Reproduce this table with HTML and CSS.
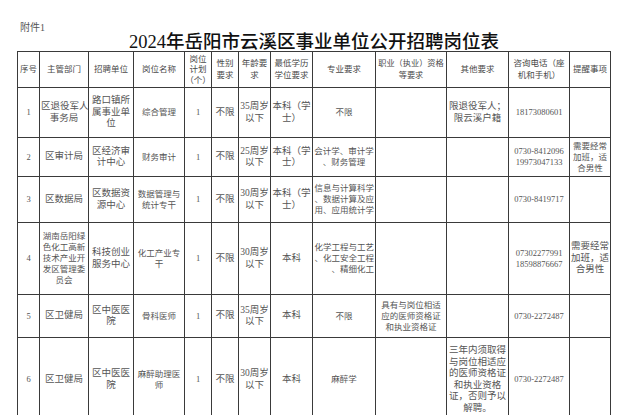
FILE: index.html
```html
<!DOCTYPE html>
<html lang="zh-CN">
<head>
<meta charset="utf-8">
<title>2024年岳阳市云溪区事业单位公开招聘岗位表</title>
<link rel="stylesheet" href="styles.css">
</head>
<body>
<div class="page">
  <div class="attach">附件1</div>
  <h1 class="title">2024年岳阳市云溪区事业单位公开招聘岗位表</h1>
  <table class="grid">
    <colgroup>
      <col class="c1"><col class="c2"><col class="c3"><col class="c4"><col class="c5"><col class="c6"><col class="c7"><col class="c8"><col class="c9"><col class="c10"><col class="c11"><col class="c12"><col class="c13">
    </colgroup>
    <thead>
      <tr class="r-head">
        <th>序号</th>
        <th>主管部门</th>
        <th>招聘单位</th>
        <th>岗位名称</th>
        <th class="three">岗位<br>计划<br>（个）</th>
        <th>性别<br>要求</th>
        <th>年龄要<br>求</th>
        <th>最低学历<br>学位要求</th>
        <th>专业要求</th>
        <th class="narrow">职业（执业）资格<br>等要求</th>
        <th>其他要求</th>
        <th>咨询电话（座<br>机和手机）</th>
        <th>提醒事项</th>
      </tr>
    </thead>
    <tbody>
      <tr class="r1">
        <td>1</td>
        <td class="big">区退役军人<br>事务局</td>
        <td class="big">路口镇所<br>属事业单<br>位</td>
        <td>综合管理</td>
        <td>1</td>
        <td class="big">不限</td>
        <td class="big">35周岁<br>以下</td>
        <td class="big">本科（学<br>士）</td>
        <td>不限</td>
        <td></td>
        <td class="big">限退役军人；<br>限云溪户籍</td>
        <td class="num">18173080601</td>
        <td></td>
      </tr>
      <tr class="r2">
        <td>2</td>
        <td class="big">区审计局</td>
        <td class="big">区经济审<br>计中心</td>
        <td>财务审计</td>
        <td>1</td>
        <td class="big">不限</td>
        <td class="big">25周岁<br>以下</td>
        <td class="big">本科（学<br>士）</td>
        <td>会计学、审计学<br>、财务管理</td>
        <td></td>
        <td></td>
        <td class="num">0730-8412096<br>19973047133</td>
        <td>需要经常<br>加班，适<br>合男性</td>
      </tr>
      <tr class="r3">
        <td>3</td>
        <td class="big">区数据局</td>
        <td class="big">区数据资<br>源中心</td>
        <td>数据管理与<br>统计专干</td>
        <td>1</td>
        <td class="big">不限</td>
        <td class="big">30周岁<br>以下</td>
        <td class="big">本科（学<br>士）</td>
        <td class="right">信息与计算科学<br>、数据计算及应<br>用、应用统计学</td>
        <td></td>
        <td></td>
        <td class="num">0730-8419717</td>
        <td></td>
      </tr>
      <tr class="r4">
        <td>4</td>
        <td>湖南岳阳绿<br>色化工高新<br>技术产业开<br>发区管理委<br>员会</td>
        <td class="big">科技创业<br>服务中心</td>
        <td>化工产业专<br>干</td>
        <td>1</td>
        <td class="big">不限</td>
        <td class="big">30周岁<br>以下</td>
        <td class="big">本科</td>
        <td class="right">化学工程与工艺<br>、化工安全工程<br>、精细化工</td>
        <td></td>
        <td></td>
        <td class="num">07302277991<br>18598876667</td>
        <td class="big">需要经常<br>加班，适<br>合男性</td>
      </tr>
      <tr class="r5">
        <td>5</td>
        <td class="big">区卫健局</td>
        <td class="big">区中医医<br>院</td>
        <td>骨科医师</td>
        <td>1</td>
        <td class="big">不限</td>
        <td class="big">35周岁<br>以下</td>
        <td class="big">本科</td>
        <td>不限</td>
        <td>具有与岗位相适<br>应的医师资格证<br>和执业资格证</td>
        <td></td>
        <td class="num">0730-2272487</td>
        <td></td>
      </tr>
      <tr class="r6">
        <td>6</td>
        <td class="big">区卫健局</td>
        <td class="big">区中医医<br>院</td>
        <td>麻醉助理医<br>师</td>
        <td>1</td>
        <td class="big">不限</td>
        <td class="big">30周岁<br>以下</td>
        <td class="big">本科</td>
        <td>麻醉学</td>
        <td></td>
        <td class="big tall">三年内须取得<br>与岗位相适应<br>的医师资格证<br>和执业资格<br>证，否则予以<br>解聘。</td>
        <td class="num">0730-2272487</td>
        <td></td>
      </tr>
    </tbody>
  </table>
</div>
</body>
</html>
```

FILE: styles.css
```css
html, body {
  margin: 0;
  padding: 0;
  background: #ffffff;
  overflow: hidden;
}

body {
  width: 638px;
  height: 415px;
  font-family: "Liberation Serif", "Noto Sans CJK SC", serif;
  color: #555555;
}

.page {
  padding: 22px 0 0 17px;
  width: 594px;
}

.attach {
  font-size: 10px;
  line-height: 12px;
  height: 12px;
  padding-left: 3px;
  color: #555555;
}

.title {
  margin: 0;
  font-size: 18.5px;
  line-height: 17px;
  height: 17px;
  font-weight: 500;
  text-align: center;
  color: #111111;
  white-space: nowrap;
  font-family: "Liberation Serif", "Noto Sans CJK SC", serif;
}

.grid {
  border-collapse: collapse;
  table-layout: fixed;
  width: 594px;
}

.grid th,
.grid td {
  border: 1px solid #3a3a3a;
  padding: 0 1px;
  text-align: center;
  vertical-align: middle;
  font-size: 8.5px;
  line-height: 11px;
  font-weight: 400;
  white-space: nowrap;
  overflow: hidden;
  color: #555555;
}

.grid th {
  font-size: 8.5px;
  line-height: 11.5px;
  color: #4a4a4a;
}

.grid th.three {
  line-height: 10.5px;
  padding: 0;
}

.grid th.narrow {
  font-size: 8.2px;
  padding: 0;
}

.grid td.big {
  font-size: 9.5px;
  line-height: 11.5px;
}

.grid td.tall {
  line-height: 11.5px;
  vertical-align: top;
  padding-top: 7px;
}

.grid td.num {
  font-size: 8.5px;
  line-height: 11px;
}

.grid td.right {
  text-align: right;
}

.c1 { width: 22px; }
.c2 { width: 49px; }
.c3 { width: 45px; }
.c4 { width: 51px; }
.c5 { width: 27px; }
.c6 { width: 27px; }
.c7 { width: 32px; }
.c8 { width: 42px; }
.c9 { width: 63px; }
.c10 { width: 71px; }
.c11 { width: 62px; }
.c12 { width: 61px; }
.c13 { width: 41px; }

.r-head { height: 36px; }
.r1 { height: 50px; }
.r2 { height: 39px; }
.r3 { height: 46px; }
.r4 { height: 72px; }
.r5 { height: 43px; }
.r6 { height: 84px; }
```
